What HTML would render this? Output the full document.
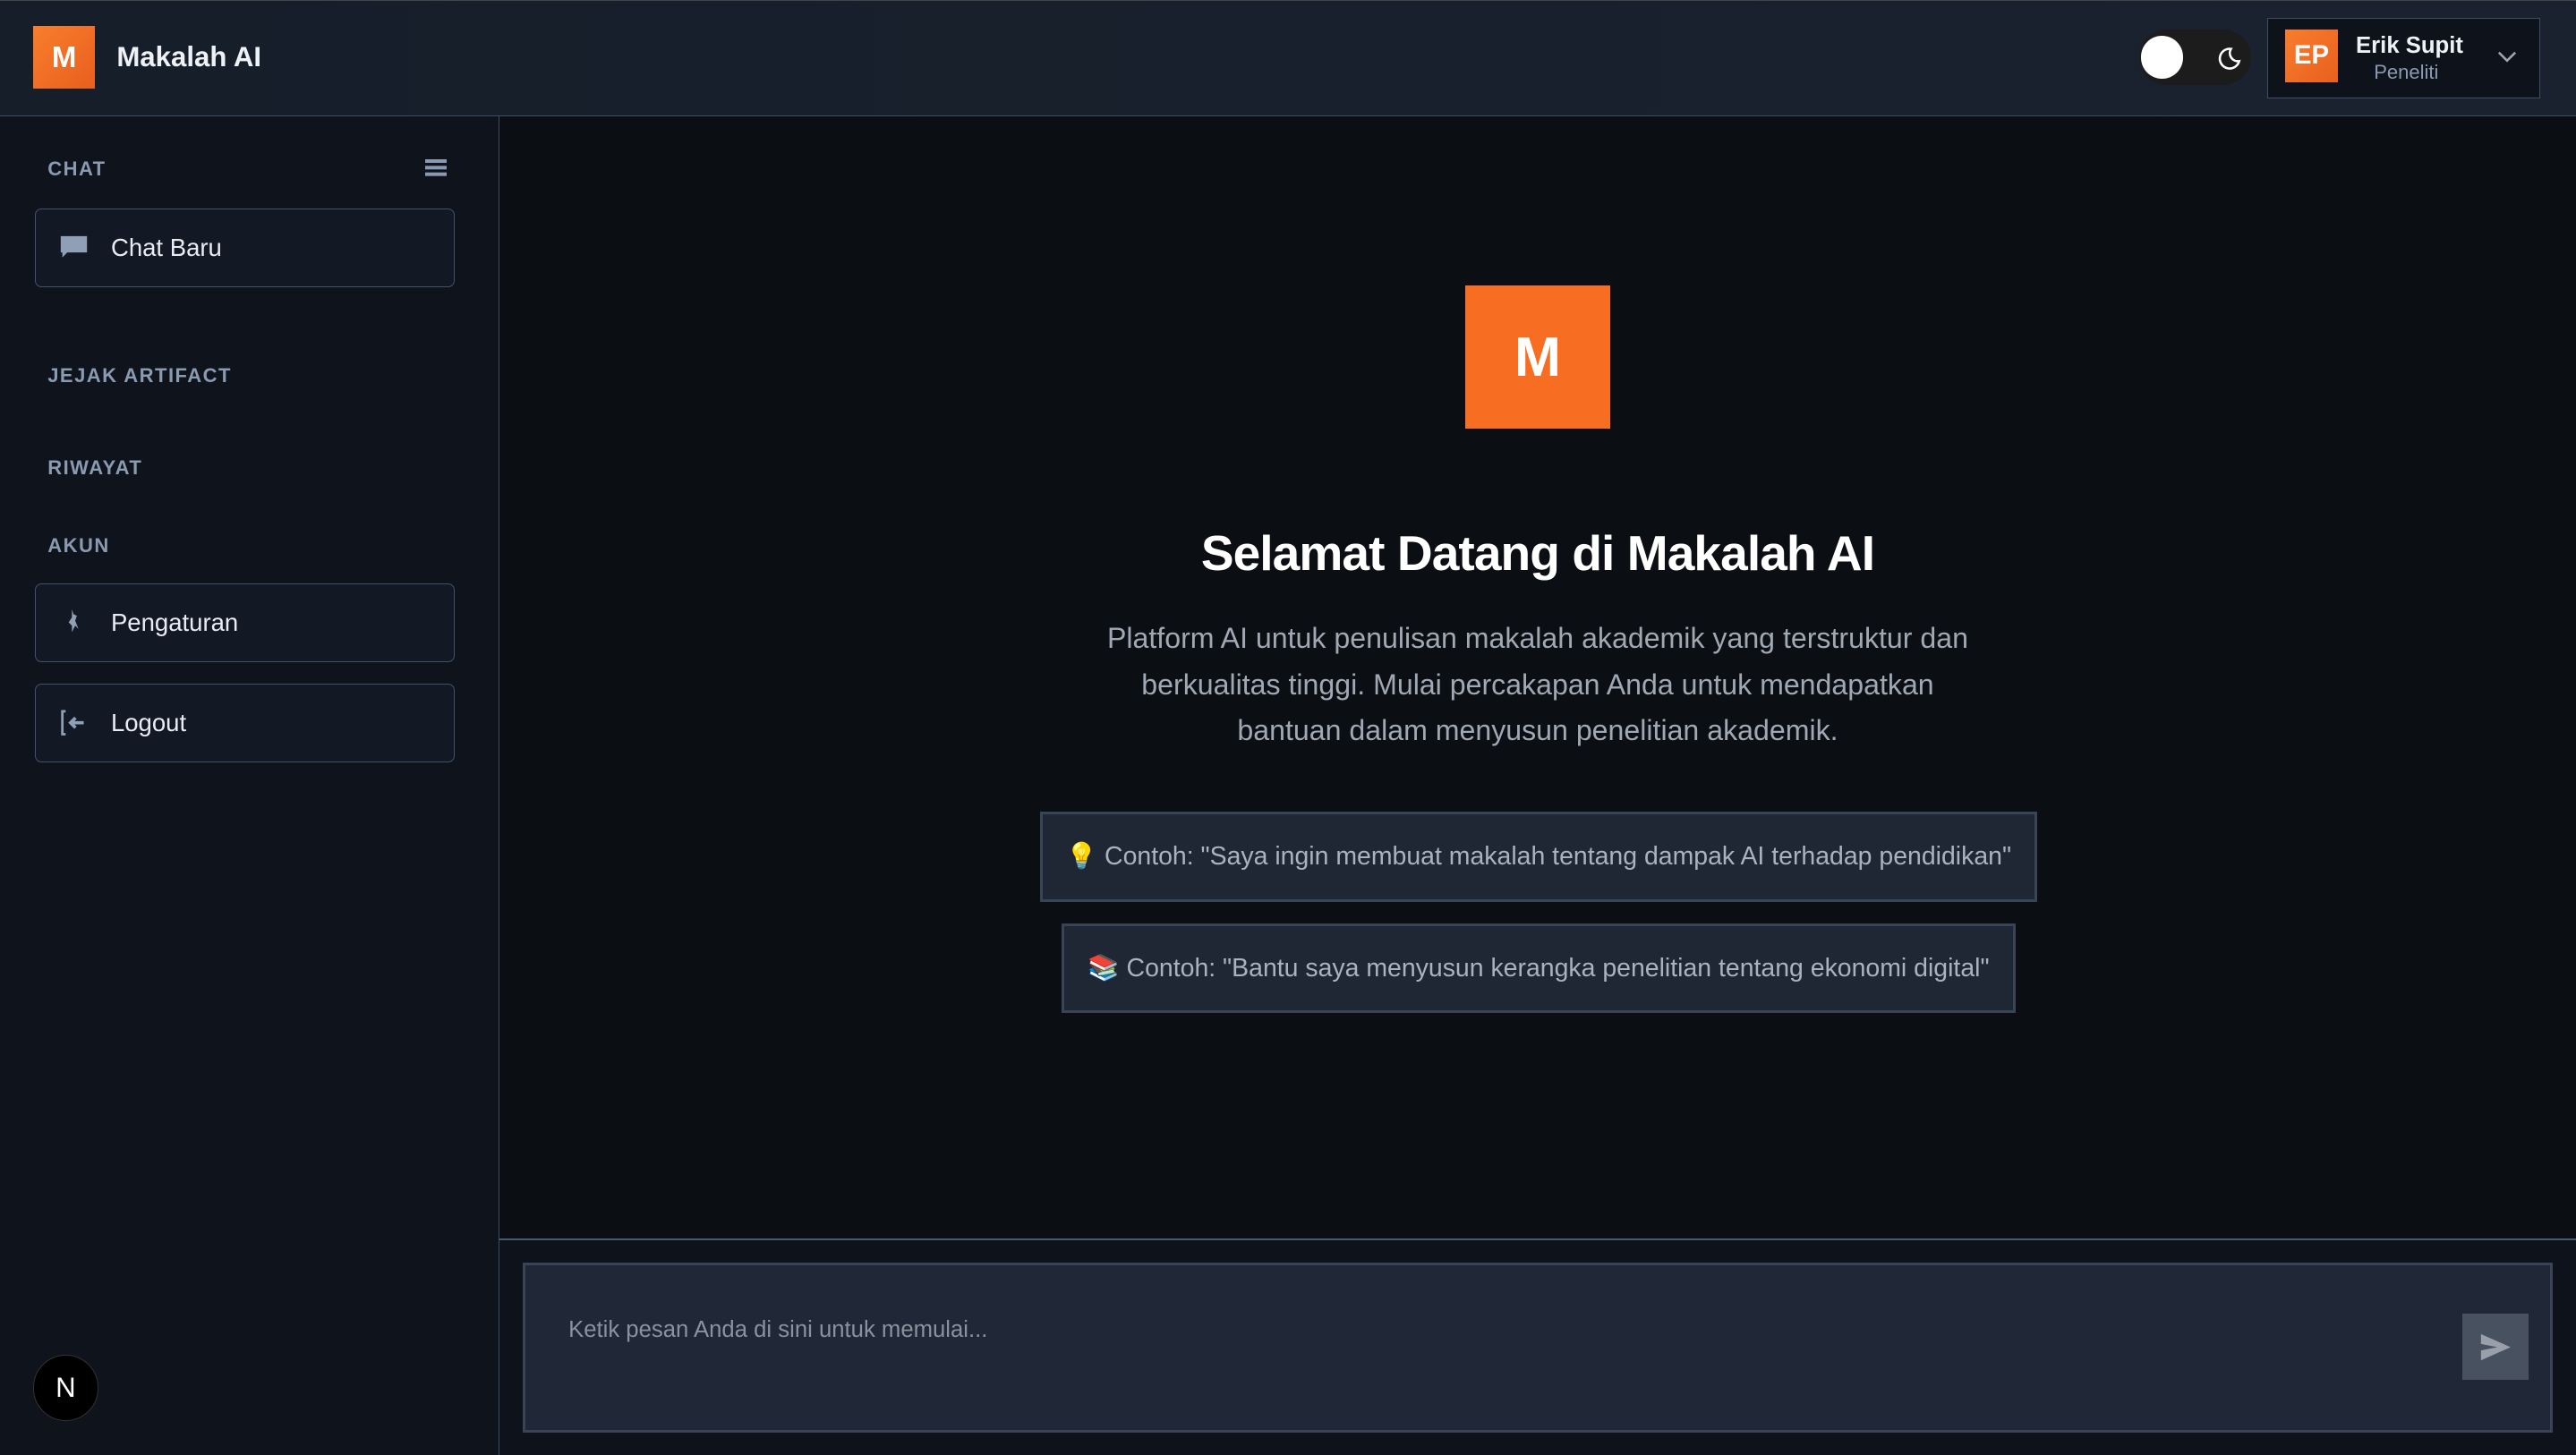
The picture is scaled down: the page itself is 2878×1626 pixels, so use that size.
<!DOCTYPE html>
<html><head><meta charset="utf-8">
<style>
*{margin:0;padding:0;box-sizing:border-box}
html,body{width:2878px;height:1626px;overflow:hidden;background:#0b0e13}
#r{zoom:1.83546;width:1568px;height:886px;position:relative;font-family:"Liberation Sans",sans-serif;background:#0b0e13;overflow:hidden}
.a{position:absolute}
.top{left:0;top:0;width:1568px;height:71px;background:linear-gradient(90deg,#161e2a,#1a2230);border-bottom:1px solid #3d4d63;border-top:1px solid #444}
.logo{left:20px;top:16px;width:38px;height:38px;background:linear-gradient(135deg,#f97d2c,#e8601f);color:#fff;font-weight:bold;font-size:18px;display:flex;align-items:center;justify-content:center}
.side{left:0;top:71px;width:304px;height:815px;background:#0f131b;border-right:1px solid #3d4d63}
.lbl{color:#8a9ab0;font-size:12px;font-weight:bold;letter-spacing:.8px;left:29px}
.btn{left:21px;width:256px;height:48px;border:1px solid #41536b;border-radius:4px;background:#121824;color:#e8edf3;font-size:15px;display:flex;align-items:center;padding-left:46px}
.ex{background:#1f2735;border:2px solid #394456;color:#aab2be;font-size:15.5px;display:flex;align-items:center;justify-content:center;letter-spacing:0}
</style></head><body><div id="r">
<div class="a top"></div>
<div class="a logo">M</div>
<div class="a" style="left:71px;top:25px;color:#eef2f7;font-size:17px;font-weight:bold">Makalah AI</div>
<div class="a" style="left:1302px;top:18px;width:68px;height:34px;border-radius:17px;background:#1c1c1c"></div>
<div class="a" style="left:1303px;top:22px;width:26px;height:26px;border-radius:50%;background:#fff"></div>
<svg class="a" style="left:1349px;top:27px" width="16" height="16" viewBox="0 0 16 16"><path d="M9 2.5A6 6 0 1 0 14 10 5 5 0 0 1 9 2.5z" fill="none" stroke="#fff" stroke-width="1.4"/></svg>
<div class="a" style="left:1380px;top:11px;width:166px;height:49px;background:#0e121a;border:1px solid #3d4d63"></div>
<div class="a" style="left:1391px;top:18px;width:32px;height:32px;background:linear-gradient(135deg,#f97d2c,#e8601f);color:#fff;font-weight:bold;font-size:16px;display:flex;align-items:center;justify-content:center">EP</div>
<div class="a" style="left:1434px;top:20px;color:#eef2f7;font-size:14px;font-weight:bold">Erik Supit</div>
<div class="a" style="left:1445px;top:37px;color:#8a9ab0;font-size:12px">Peneliti</div>
<svg class="a" style="left:1520px;top:30px" width="12" height="10" viewBox="0 0 12 10"><path d="M1 2l5 5 5-5" fill="none" stroke="#9aa6b6" stroke-width="1.4"/></svg>

<div class="a side"></div>
<div class="a lbl" style="top:96px">CHAT</div>
<div class="a" style="left:259px;top:97px;width:13px;height:2px;background:#8a9ab0;box-shadow:0 4px 0 #8a9ab0,0 8px 0 #8a9ab0"></div>
<div class="a btn" style="top:127px">Chat Baru</div>
<svg class="a" style="left:36px;top:143px" width="18" height="16" viewBox="0 0 18 16"><path d="M1 1h16v10H5l-3 3v-3H1z" fill="#8fa0b6"/></svg>
<div class="a lbl" style="top:222px">JEJAK ARTIFACT</div>
<div class="a lbl" style="top:278px">RIWAYAT</div>
<div class="a lbl" style="top:325px">AKUN</div>
<div class="a btn" style="top:355px">Pengaturan</div>
<svg class="a" style="left:40px;top:370px" width="10" height="16" viewBox="0 0 10 16"><path d="M4 1l1 3 2 1-1 3 2 5-2-2-2 4 0-4-2-2 2-3z" fill="#8fa0b6"/></svg>
<div class="a btn" style="top:416px">Logout</div>
<svg class="a" style="left:36px;top:432px" width="18" height="16" viewBox="0 0 18 16"><path d="M4 1H2v14h2" fill="none" stroke="#8fa0b6" stroke-width="1.5"/><path d="M7 8h8M10 5L7 8l3 3" fill="none" stroke="#8fa0b6" stroke-width="2"/></svg>
<div class="a" style="left:20px;top:825px;width:40px;height:40px;border-radius:50%;background:#000;border:1px solid #333;color:#fff;font-size:17px;display:flex;align-items:center;justify-content:center">N</div>

<div class="a" style="left:892px;top:174px;width:88px;height:87px;background:#f76e22;color:#fff;font-size:34px;font-weight:bold;display:flex;align-items:center;justify-content:center">M</div>
<div class="a" style="left:304px;width:1264px;top:319px;text-align:center;color:#fff;font-size:30px;font-weight:bold;letter-spacing:-.5px">Selamat Datang di Makalah AI</div>
<div class="a" style="left:304px;width:1264px;top:375px;text-align:center;color:#a0a8b4;font-size:17.5px;line-height:28px;letter-spacing:0">Platform AI untuk penulisan makalah akademik yang terstruktur dan<br>berkualitas tinggi. Mulai percakapan Anda untuk mendapatkan<br>bantuan dalam menyusun penelitian akademik.</div>
<div class="a ex" style="left:633px;top:494px;width:607px;height:55px">💡 Contoh: "Saya ingin membuat makalah tentang dampak AI terhadap pendidikan"</div>
<div class="a ex" style="left:646px;top:562px;width:581px;height:55px">📚 Contoh: "Bantu saya menyusun kerangka penelitian tentang ekonomi digital"</div>

<div class="a" style="left:304px;top:754px;width:1264px;height:1px;background:#4a5870"></div>
<div class="a" style="left:304px;top:755px;width:1264px;height:131px;background:#0e121a"></div>
<div class="a" style="left:318px;top:769px;width:1236px;height:103px;background:#202837;border:2px solid #394456"></div>
<div class="a" style="left:346px;top:802px;color:#8a929e;font-size:14px">Ketik pesan Anda di sini untuk memulai...</div>
<div class="a" style="left:1499px;top:800px;width:40px;height:40px;background:#485160"></div>
<svg class="a" style="left:1509px;top:811px" width="20" height="18" viewBox="0 0 20 18"><path d="M1 1l18 8-18 8 0-6 10-2-10-2z" fill="#9aa0aa"/></svg>
</div></body></html>
